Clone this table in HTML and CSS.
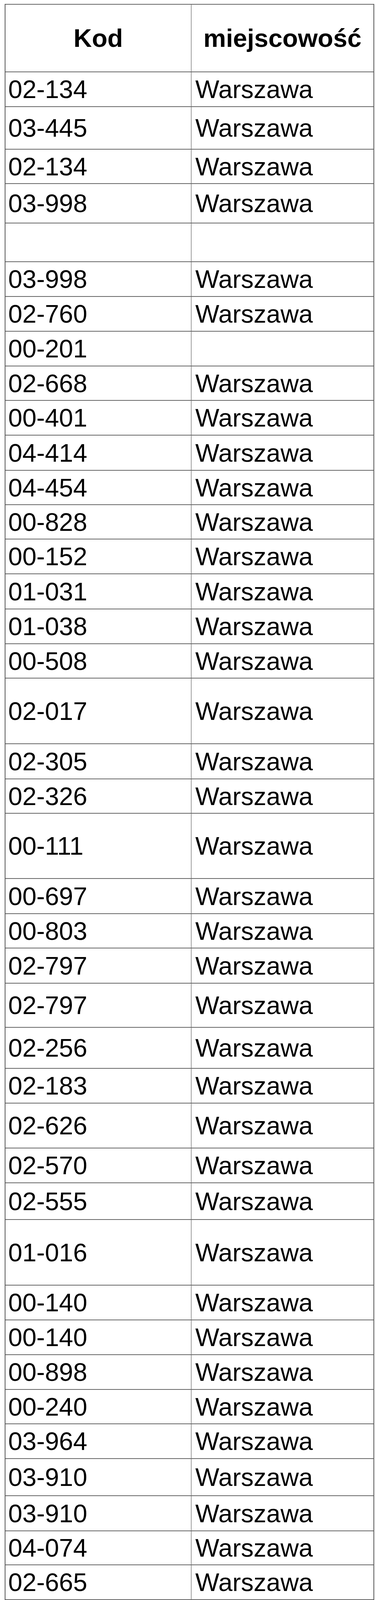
FILE: index.html
```html
<!DOCTYPE html>
<html lang="pl">
<head>
<meta charset="utf-8">
<title>Kody pocztowe</title>
<link rel="stylesheet" href="styles.css">
</head>
<body>
<div class="sheet">
  <div class="row head h173"><div class="cell code">Kod</div><div class="cell city">miejscowość</div></div>
  <div class="row"><div class="cell code">02-134</div><div class="cell city">Warszawa</div></div>
  <div class="row h109"><div class="cell code">03-445</div><div class="cell city">Warszawa</div></div>
  <div class="row h88"><div class="cell code">02-134</div><div class="cell city">Warszawa</div></div>
  <div class="row h101"><div class="cell code">03-998</div><div class="cell city">Warszawa</div></div>
  <div class="row h99"><div class="cell code"></div><div class="cell city"></div></div>
  <div class="row"><div class="cell code">03-998</div><div class="cell city">Warszawa</div></div>
  <div class="row"><div class="cell code">02-760</div><div class="cell city">Warszawa</div></div>
  <div class="row"><div class="cell code">00-201</div><div class="cell city"></div></div>
  <div class="row h88"><div class="cell code">02-668</div><div class="cell city">Warszawa</div></div>
  <div class="row"><div class="cell code">00-401</div><div class="cell city">Warszawa</div></div>
  <div class="row h90"><div class="cell code">04-414</div><div class="cell city">Warszawa</div></div>
  <div class="row h88"><div class="cell code">04-454</div><div class="cell city">Warszawa</div></div>
  <div class="row h88"><div class="cell code">00-828</div><div class="cell city">Warszawa</div></div>
  <div class="row"><div class="cell code">00-152</div><div class="cell city">Warszawa</div></div>
  <div class="row h90"><div class="cell code">01-031</div><div class="cell city">Warszawa</div></div>
  <div class="row"><div class="cell code">01-038</div><div class="cell city">Warszawa</div></div>
  <div class="row h88"><div class="cell code">00-508</div><div class="cell city">Warszawa</div></div>
  <div class="row h168"><div class="cell code">02-017</div><div class="cell city">Warszawa</div></div>
  <div class="row h90"><div class="cell code">02-305</div><div class="cell city">Warszawa</div></div>
  <div class="row h88"><div class="cell code">02-326</div><div class="cell city">Warszawa</div></div>
  <div class="row h167"><div class="cell code">00-111</div><div class="cell city">Warszawa</div></div>
  <div class="row h90"><div class="cell code">00-697</div><div class="cell city">Warszawa</div></div>
  <div class="row h88"><div class="cell code">00-803</div><div class="cell city">Warszawa</div></div>
  <div class="row h90"><div class="cell code">02-797</div><div class="cell city">Warszawa</div></div>
  <div class="row h113"><div class="cell code">02-797</div><div class="cell city">Warszawa</div></div>
  <div class="row h105"><div class="cell code">02-256</div><div class="cell city">Warszawa</div></div>
  <div class="row"><div class="cell code">02-183</div><div class="cell city">Warszawa</div></div>
  <div class="row h115"><div class="cell code">02-626</div><div class="cell city">Warszawa</div></div>
  <div class="row"><div class="cell code">02-570</div><div class="cell city">Warszawa</div></div>
  <div class="row h94"><div class="cell code">02-555</div><div class="cell city">Warszawa</div></div>
  <div class="row h168"><div class="cell code">01-016</div><div class="cell city">Warszawa</div></div>
  <div class="row"><div class="cell code">00-140</div><div class="cell city">Warszawa</div></div>
  <div class="row"><div class="cell code">00-140</div><div class="cell city">Warszawa</div></div>
  <div class="row"><div class="cell code">00-898</div><div class="cell city">Warszawa</div></div>
  <div class="row h88"><div class="cell code">00-240</div><div class="cell city">Warszawa</div></div>
  <div class="row"><div class="cell code">03-964</div><div class="cell city">Warszawa</div></div>
  <div class="row h95"><div class="cell code">03-910</div><div class="cell city">Warszawa</div></div>
  <div class="row h90"><div class="cell code">03-910</div><div class="cell city">Warszawa</div></div>
  <div class="row h87"><div class="cell code">04-074</div><div class="cell city">Warszawa</div></div>
  <div class="row"><div class="cell code">02-665</div><div class="cell city">Warszawa</div></div>
  <div class="row"><div class="cell code">01-503</div><div class="cell city">Warszawa</div></div>
  <div class="row h90"><div class="cell code">02-091</div><div class="cell city">Warszawa</div></div>
  <div class="row h88"><div class="cell code">04-628</div><div class="cell city">Warszawa</div></div>
  <div class="row"><div class="cell code">00-201</div><div class="cell city">Warszawa</div></div>
  <div class="row h88"><div class="cell code">00-201</div><div class="cell city">Warszawa</div></div>
  <div class="row h90"><div class="cell code">03-126</div><div class="cell city">Warszawa</div></div>
</div>
</body>
</html>
```

FILE: styles.css
```css
html, body {
  margin: 0;
  padding: 0;
  background: #ffffff;
}

body {
  font-family: "Liberation Sans", Arial, sans-serif;
  color: #000000;
}

.sheet {
  box-sizing: border-box;
  width: 946px;
  margin: 10px 0 0 12px;
  border-left: 2px solid #555555;
  border-right: 2px solid #555555;
  border-bottom: 2px solid #666666;
}

.row {
  box-sizing: border-box;
  display: flex;
  height: 89px;
  border-top: 2px solid #666666;
}

.cell {
  box-sizing: border-box;
  display: flex;
  align-items: center;
  font-size: 65px;
  line-height: 1;
  white-space: nowrap;
}

.code {
  width: 476px;
  padding-left: 7px;
  border-right: 1px solid #444444;
}

.city {
  flex: 1;
  padding-left: 10px;
}

.head .cell {
  justify-content: center;
  padding-left: 0;
  font-weight: bold;
}

.h87 { height: 87px; }
.h88 { height: 88px; }
.h90 { height: 90px; }
.h94 { height: 94px; }
.h95 { height: 95px; }
.h99 { height: 99px; }
.h101 { height: 101px; }
.h105 { height: 105px; }
.h109 { height: 109px; }
.h113 { height: 113px; }
.h115 { height: 115px; }
.h167 { height: 167px; }
.h168 { height: 168px; }
.h173 { height: 173px; }
```
